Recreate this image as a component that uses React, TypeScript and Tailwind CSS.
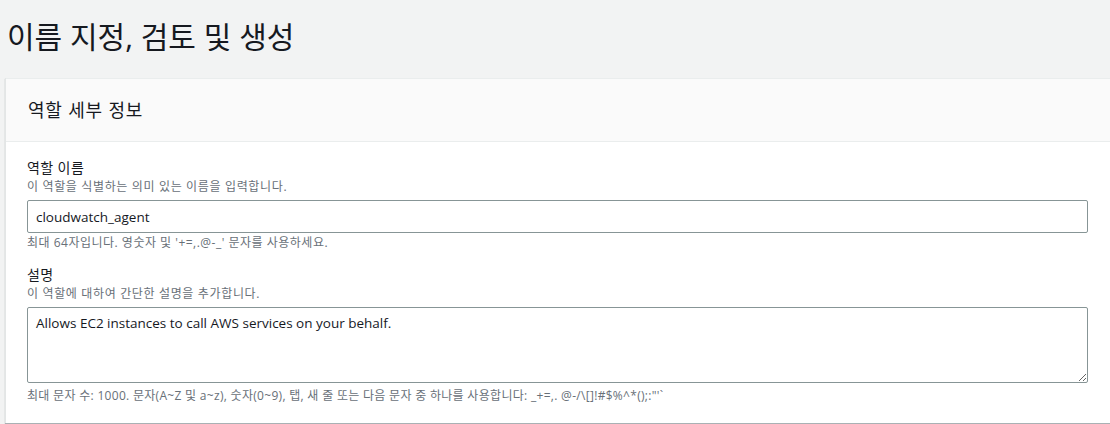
export default function App() {
  return (
    <div
      className="min-h-[424px] w-[1110px] overflow-hidden bg-[#f2f3f3] text-[#16191f]"
      style={{ fontFamily: '"Open Sans", "Noto Sans CJK KR", sans-serif' }}
    >
      <div className="flex h-[78px] items-start pl-[7px] pt-[17px]">
        <h1 className="text-[30px] leading-[40px] font-normal">이름 지정, 검토 및 생성</h1>
      </div>

      <div className="ml-[5px] w-[1130px] border-l border-[#e3e6e6] bg-white shadow-[0_1px_1px_0_rgba(0,28,36,0.3)]">
        <div className="flex h-[64px] items-center border-t border-b border-[#eaeded] bg-[#fafafa] pl-[22px]">
          <h2 className="text-[18px] leading-[24px] font-normal tracking-[0.8px]">역할 세부 정보</h2>
        </div>

        <div className="pl-[21px] pt-[15px] pb-[19px]">
          <div className="text-[14px] leading-[22px] tracking-[0.4px]">역할 이름</div>
          <div className="text-[12px] leading-[16px] tracking-[0.65px] text-[#687078]">
            이 역할을 식별하는 의미 있는 이름을 입력합니다.
          </div>
          <input
            readOnly
            defaultValue="cloudwatch_agent"
            className="mt-[5px] block h-[33px] w-[1061px] rounded-[2px] border border-[#879596] bg-white px-[8px] text-[13.5px] text-[#16191f] outline-none"
          />
          <div className="mt-[2px] text-[12px] leading-[16px] tracking-[0.5px] text-[#687078]">
            최대 64자입니다. 영숫자 및 '+=,.@-_' 문자를 사용하세요.
          </div>

          <div className="mt-[13px] text-[14px] leading-[22px] tracking-[0.4px]">설명</div>
          <div className="text-[12px] leading-[16px] tracking-[0.65px] text-[#687078]">
            이 역할에 대하여 간단한 설명을 추가합니다.
          </div>
          <textarea
            readOnly
            defaultValue="Allows EC2 instances to call AWS services on your behalf."
            className="mt-[5px] block h-[76px] w-[1061px] rounded-[2px] border border-[#879596] bg-white px-[8px] py-[4px] text-[13.5px] leading-[22px] text-[#16191f] outline-none"
          />
          <div className="mt-[5px] text-[12px] leading-[16px] tracking-[0.3px] text-[#687078]">
            최대 문자 수: 1000. 문자(A~Z 및 a~z), 숫자(0~9), 탭, 새 줄 또는 다음 문자 중 하나를 사용합니다: _+=,. @-/\[{}]!#$%^*();:"'`
          </div>
        </div>
      </div>
    </div>
  );
}
